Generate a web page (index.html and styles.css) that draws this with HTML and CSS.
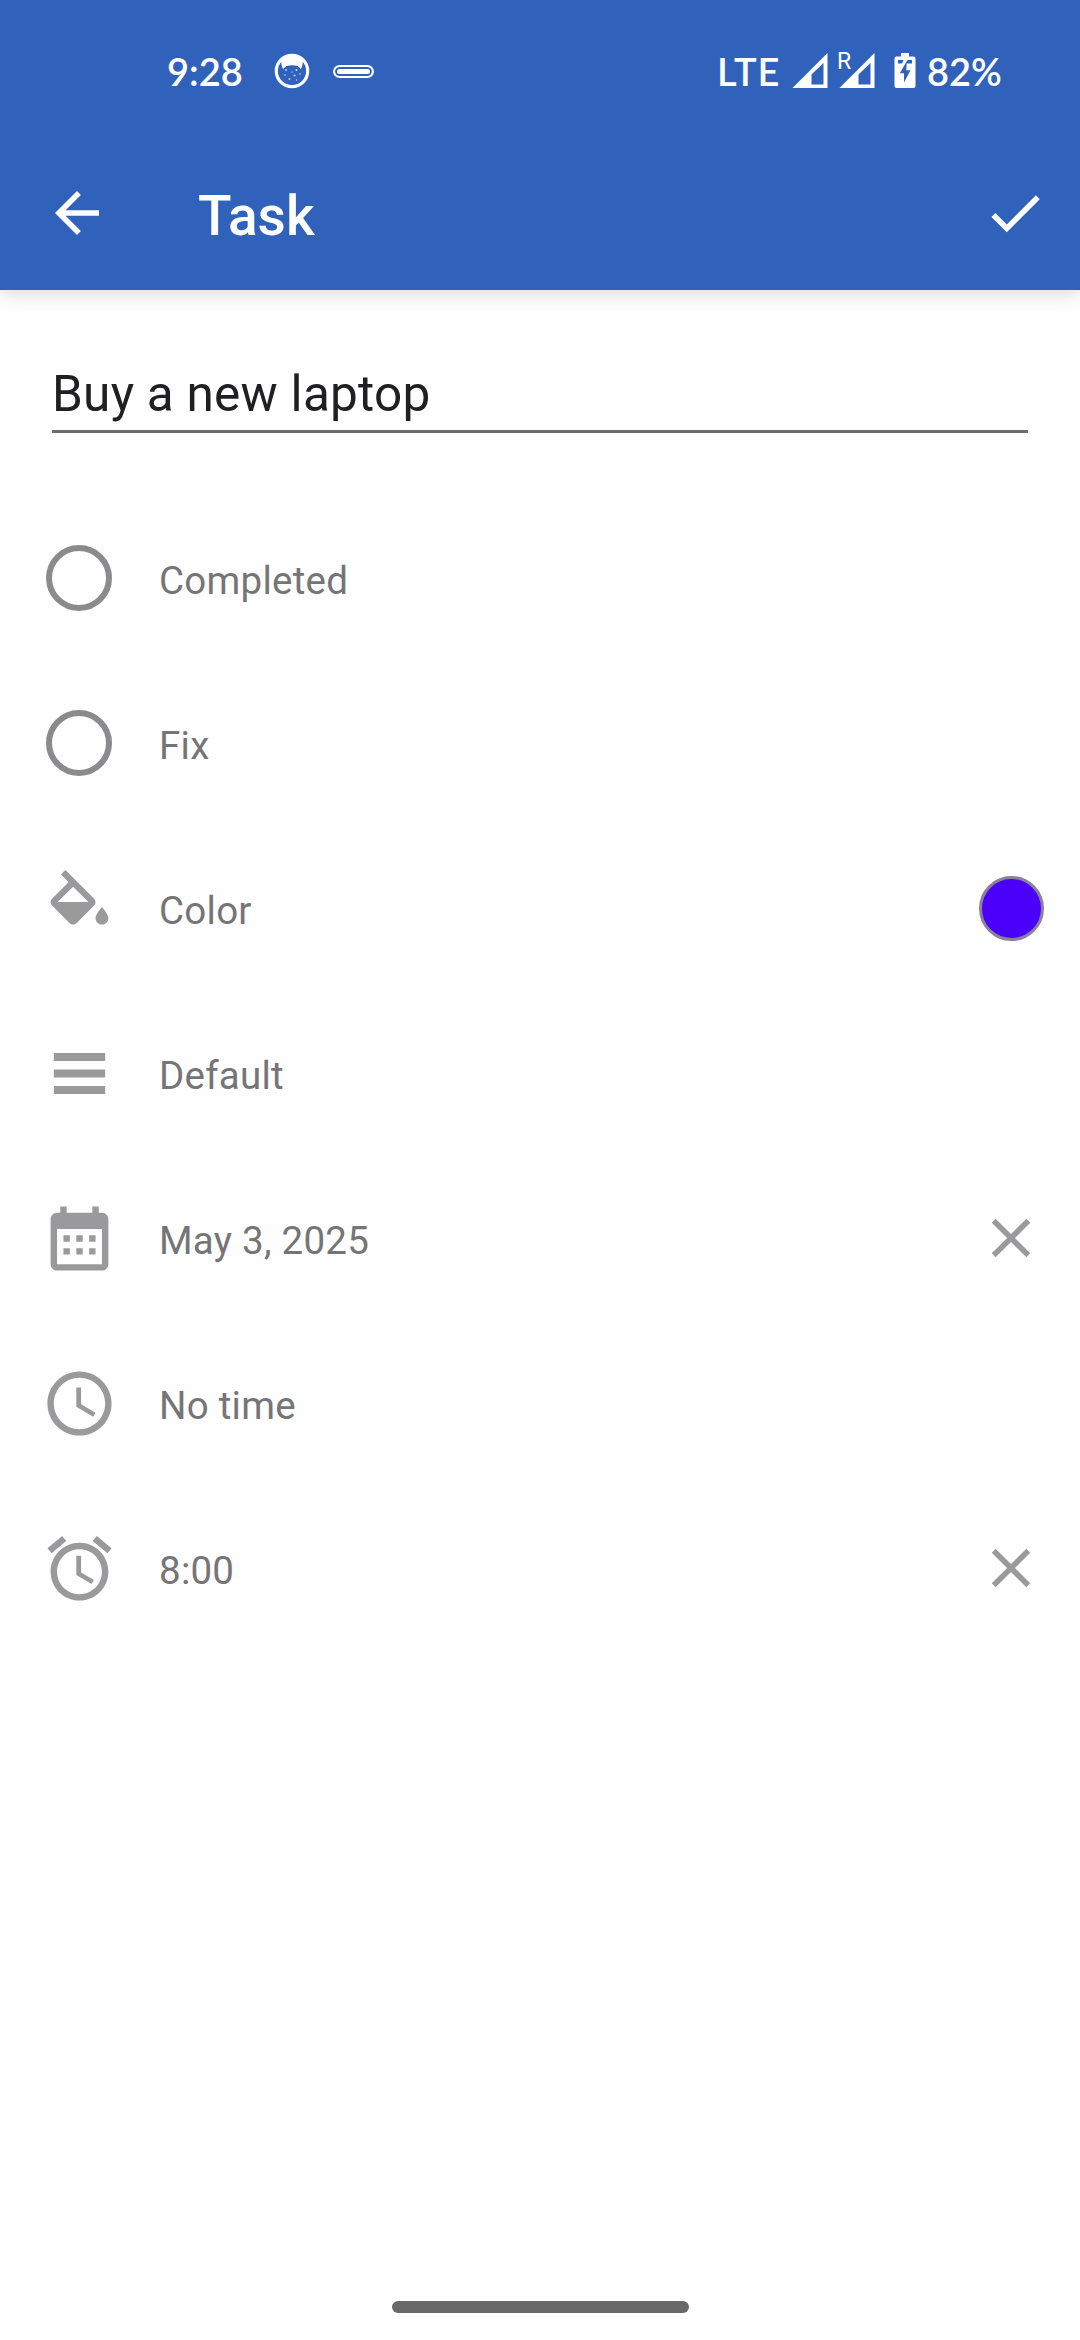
FILE: index.html
```html
<!DOCTYPE html>
<html lang="en">
<head>
    <meta charset="UTF-8">
    <title>Task</title>
    <link rel="stylesheet" href="styles.css">
</head>
<body>

    <header class="top">
        <div class="status-bar">
            <span class="clock">9:28</span>
            <svg class="cat" viewBox="0 0 36 36">
                <circle cx="18" cy="18" r="15.7" fill="none" stroke="#fff" stroke-width="3.2"/>
                <path d="M8 5Q18-1 28 5L29 8Q28.500 13 27 16L23.500 13Q18 11.500 12.500 13L9 16Q7.500 13 7 8Z" fill="#fff"/>
                <g fill="#fff" opacity=".75">
                    <circle cx="12" cy="17" r=".9"/><circle cx="22.500" cy="17" r="1.100"/>
                    <circle cx="18" cy="19" r=".7"/><circle cx="11" cy="22" r=".8"/>
                    <circle cx="20.500" cy="22.500" r="1"/><circle cx="26" cy="21" r=".8"/>
                    <circle cx="15.500" cy="26" r=".9"/><circle cx="22.500" cy="27" r=".7"/>
                </g>
            </svg>
            <span class="pill"></span>
            <div class="status-right">
                <span class="network">LTE</span>
                <svg class="signal" viewBox="0 0 36 36">
                    <path d="M35.500 0V35H.5ZM31.500 10 19.500 21.500V31.500H31.500Z" fill="#fff" fill-rule="evenodd"/>
                </svg>
                <div class="roaming">
                    <svg class="signal" viewBox="0 0 36 36">
                        <path d="M35.500 0V35H.5ZM31.500 10 19.500 21.500V31.500H31.500Z" fill="#fff" fill-rule="evenodd"/>
                    </svg>
                    <span class="roaming-badge">R</span>
                </div>
                <svg class="battery" viewBox="0 0 22 36">
                    <path d="M7 0h8v3.500h4.500a2 2 0 0 1 2 2V33a2 2 0 0 1-2 2h-17a2 2 0 0 1-2-2V5.500a2 2 0 0 1 2-2H7z" fill="#fff"/>
                    <path d="M4 7h5.500L8 10.500H4zM13.500 7H18v3.500h-6z" fill="#3062bb"/>
                    <path d="M12.800 8 5.800 20.200H10V29.500L16.500 17.200H12.300Z" fill="#3062bb"/>
                </svg>
                <span class="percent">82%</span>
            </div>
        </div>
        <div class="toolbar">
            <svg class="icon-action" viewBox="0 0 24 24"><path d="M20 11H7.830l5.590-5.590L12 4l-8 8 8 8 1.410-1.410L7.830 13H20z"/></svg>
            <h1>Task</h1>
            <svg class="icon-action" viewBox="0 0 24 24"><path d="M9 16.170 4.830 12l-1.420 1.410L9 19 21 7l-1.410-1.410z"/></svg>
        </div>
    </header>

    <main>
        <div class="task-name">Buy a new laptop</div>

        <ul class="options">
            <li>
                <span class="radio"></span>
                <span class="label">Completed</span>
            </li>
            <li>
                <span class="radio"></span>
                <span class="label">Fix</span>
            </li>
            <li>
                <svg class="icon" viewBox="0 0 24 24"><path d="M16.560 8.940 7.620 0 6.210 1.410l2.380 2.380-5.150 5.150c-.59.59-.59 1.540 0 2.120l5.500 5.500c.29.29.68.44 1.060.44s.77-.15 1.060-.44l5.500-5.500c.59-.58.59-1.530 0-2.120zM5.210 10 10 5.210 14.790 10zM19 11.500s-2 2.170-2 3.500c0 1.100.9 2 2 2s2-.9 2-2c0-1.330-2-3.500-2-3.500z"/></svg>
                <span class="label">Color</span>
                <span class="swatch"></span>
            </li>
            <li>
                <svg class="icon" viewBox="0 0 24 24"><path d="M4 5.600h16v2.500H4zM4 10.750h16v2.500H4zM4 15.900h16v2.500H4z"/></svg>
                <span class="label">Default</span>
            </li>
            <li>
                <svg class="icon" viewBox="0 0 24 24"><path fill-rule="evenodd" d="M19 4h-1V2h-2v2H8V2H6v2H5C3.890 4 3 4.900 3 6v14c0 1.100.89 2 2 2h14c1.100 0 2-.9 2-2V6c0-1.100-.9-2-2-2zM19 20H5V9h14zM7 11h2v2H7zM11 11h2v2h-2zM15 11h2v2h-2zM7 15h2v2H7zM11 15h2v2h-2zM15 15h2v2h-2z"/></svg>
                <span class="label">May 3, 2025</span>
                <svg class="icon-clear" viewBox="0 0 24 24"><path d="M19 6.410 17.590 5 12 10.590 6.410 5 5 6.410 10.590 12 5 17.590 6.410 19 12 13.410 17.590 19 19 17.590 13.410 12z"/></svg>
            </li>
            <li>
                <svg class="icon" viewBox="0 0 24 24"><path d="M11.990 2C6.470 2 2 6.480 2 12s4.470 10 9.990 10C17.520 22 22 17.520 22 12S17.520 2 11.990 2zM12 20c-4.420 0-8-3.580-8-8s3.580-8 8-8 8 3.580 8 8-3.580 8-8 8zM12.500 7H11v6l5.250 3.150.75-1.230-4.500-2.670z"/></svg>
                <span class="label">No time</span>
            </li>
            <li>
                <svg class="icon" viewBox="0 0 24 24"><path d="M22 5.720l-4.600-3.860-1.290 1.530 4.600 3.860L22 5.720zM7.880 3.390 6.600 1.860 2 5.710l1.290 1.530 4.590-3.850zM12.500 8H11v6l4.750 2.850.75-1.230-4-2.370V8zM12 4c-4.970 0-9 4.030-9 9s4.020 9 9 9c4.970 0 9-4.030 9-9s-4.030-9-9-9zM12 20c-3.870 0-7-3.130-7-7s3.130-7 7-7 7 3.130 7 7-3.130 7-7 7z"/></svg>
                <span class="label">8:00</span>
                <svg class="icon-clear" viewBox="0 0 24 24"><path d="M19 6.410 17.590 5 12 10.590 6.410 5 5 6.410 10.590 12 5 17.590 6.410 19 12 13.410 17.590 19 19 17.590 13.410 12z"/></svg>
            </li>
        </ul>
    </main>

    <footer>
        <div class="home-handle"></div>
    </footer>

</body>
</html>
```
FILE: styles.css
```css
* {
    box-sizing: border-box;
}
body {
    margin: 0;
    height: 2340px;
    display: flex;
    flex-direction: column;
    background-color: #fefefe;
    font-family: Roboto, sans-serif;
    overflow: hidden;
}
svg {
    display: block;
    flex: none;
}
.top {
    height: 290px;
    background-color: #3062bb;
    color: #fff;
    box-shadow: 0 2px 18px rgba(0, 0, 0, 0.17);
}

/* status bar */
.status-bar {
    height: 136px;
    padding: 6px 0 0 167px;
    display: flex;
    align-items: center;
    font-family: Lato, sans-serif;
    font-weight: 600;
    font-size: 38px;
    line-height: 44px;
}
.clock {
    width: 107px;
}
.cat {
    width: 36px;
    height: 36px;
    margin-right: 23px;
}
.pill {
    width: 41px;
    height: 13px;
    border: 2px solid #fff;
    border-radius: 7px;
    background-color: #fff;
    box-shadow: inset 0 0 0 2px #3062bb;
}
.status-right {
    margin-left: auto;
    display: flex;
    align-items: center;
}
.network {
    width: 75px;
    letter-spacing: 0.8px;
}
.signal {
    width: 36px;
    height: 36px;
}
.roaming {
    position: relative;
    margin-left: 11px;
}
.roaming-badge {
    position: absolute;
    left: -2px;
    top: -5px;
    font-family: Roboto, sans-serif;
    font-weight: 400;
    font-size: 23px;
    line-height: 27px;
}
.battery {
    width: 22px;
    height: 36px;
    margin: 0 11px 0 19px;
}
.percent {
    width: 153px;
}

/* toolbar */
.toolbar {
    height: 154px;
    padding: 0 32px 0 44px;
    display: flex;
    align-items: center;
}
.toolbar h1 {
    flex: 1;
    margin: 0;
    padding: 5px 0 0 88px;
    font-size: 55px;
    font-weight: 500;
    line-height: 64px;
}
.icon-action {
    width: 66px;
    height: 66px;
    fill: #fff;
}

/* task form */
main {
    flex: 1;
}
.task-name {
    margin: 70px 52px 0;
    height: 73px;
    padding-top: 5px;
    border-bottom: 3px solid #6b6b6d;
    color: #202023;
    font-size: 49.5px;
    line-height: 58px;
    letter-spacing: 0.25px;
}
.options {
    list-style: none;
    margin: 63px 0 0;
    padding: 0 36px 0 41px;
}
.options li {
    height: 165px;
    display: flex;
    align-items: center;
}
.icon {
    width: 77px;
    height: 77px;
    fill: #9a9a9c;
}
.radio {
    width: 66px;
    height: 66px;
    margin: 0 6px 2px 5px;
    border: 6.5px solid #8b8b8d;
    border-radius: 50%;
}
.label {
    flex: 1;
    padding: 5px 0 0 41px;
    color: #757577;
    font-size: 38.5px;
    line-height: 46px;
    letter-spacing: 0.25px;
}
.swatch {
    width: 65px;
    height: 65px;
    border: 3px solid #8a8199;
    border-radius: 50%;
    background-color: #4b00fa;
}
.icon-clear {
    width: 66px;
    height: 66px;
    margin-bottom: 2px;
    fill: #9a9a9c;
}

/* gesture bar */
footer {
    height: 39px;
    display: flex;
    justify-content: center;
}
.home-handle {
    width: 297px;
    height: 12px;
    border-radius: 6px;
    background-color: #69696a;
}
```
